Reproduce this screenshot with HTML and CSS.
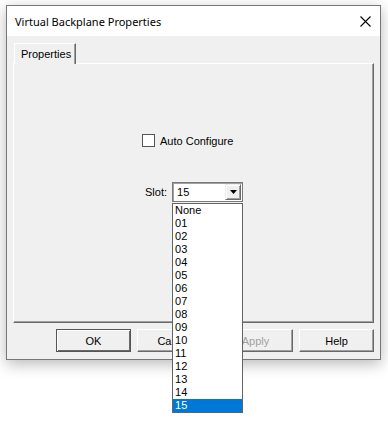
FILE: index.html
```html
<!DOCTYPE html>
<html lang="en">
<head>
  <meta charset="UTF-8">
  <title>Virtual Backplane Properties</title>
  <link rel="stylesheet" href="styles.css">
</head>
<body>
  <!-- Dialog Window -->
  <div class="window">
    <div class="titlebar">
      <span class="title">Virtual Backplane Properties</span>
      <svg class="close" width="11" height="11" viewBox="0 0 11 11">
        <path d="M0.5 0.5 L10.5 10.5 M10.5 0.5 L0.5 10.5" stroke="#000" stroke-width="1.1" fill="none"/>
      </svg>
    </div>

    <div class="client">
      <!-- Tab strip -->
      <div class="tabs">
        <div class="tab">Properties</div>
      </div>

      <!-- Tab page -->
      <div class="panel">
        <label class="check-row">
          <span class="checkbox"></span>
          <span>Auto Configure</span>
        </label>

        <div class="slot-row">
          <span class="slot-label">Slot:</span>
          <div class="combo">
            <span class="combo-value">15</span>
            <span class="combo-btn">
              <svg width="7" height="4" viewBox="0 0 7 4"><path d="M0 0 H7 L3.5 4 Z" fill="#000"/></svg>
            </span>

            <!-- Open drop-down list -->
            <ul class="droplist">
              <li>None</li>
              <li>01</li>
              <li>02</li>
              <li>03</li>
              <li>04</li>
              <li>05</li>
              <li>06</li>
              <li>07</li>
              <li>08</li>
              <li>09</li>
              <li>10</li>
              <li>11</li>
              <li>12</li>
              <li>13</li>
              <li>14</li>
              <li class="selected">15</li>
            </ul>
          </div>
        </div>
      </div>

      <!-- Dialog buttons -->
      <div class="buttons">
        <button class="btn default">OK</button>
        <button class="btn">Cancel</button>
        <button class="btn" disabled>Apply</button>
        <button class="btn">Help</button>
      </div>
    </div>
  </div>
</body>
</html>
```

FILE: styles.css
```css
/* Base */
* { box-sizing: border-box; margin: 0; padding: 0; }
html, body {
  height: 100%;
  background: #fff;
  font-family: "Liberation Sans", Arial, sans-serif;
  font-size: 11px;
  color: #000;
}
body { padding-top: 5px; }

/* Window frame */
.window {
  margin-left: 6px;
  width: 375px;
  height: 355px;
  border: 1px solid #777;
  background: #f0f0f0;
  box-shadow: 0 4px 14px rgba(0, 0, 0, 0.28);
  display: flex;
  flex-direction: column;
}

/* Title bar */
.titlebar {
  height: 30px;
  background: #fff;
  display: flex;
  align-items: center;
  justify-content: space-between;
  padding: 0 9px 0 8px;
}
.title {
  font-family: "Noto Sans", "Liberation Sans", sans-serif;
  font-size: 11px;
  padding-top: 1px;
}

/* Client area */
.client {
  flex: 1;
  padding: 7px 6px 0 6px;
  display: flex;
  flex-direction: column;
}

/* Tabs */
.tabs {
  display: flex;
  padding-left: 1px;
  height: 20px;
}
.tab {
  width: 62px;
  height: 21px;
  padding: 4px 0 0 6px;
  background: #f0f0f0;
  border-top: 1px solid #fff;
  border-left: 1px solid #fff;
  border-right: 1px solid #696969;
  box-shadow: inset -1px 0 0 #a0a0a0;
  position: relative;
  z-index: 1;
}

.panel {
  width: 361px;
  height: 260px;
  border-top: 1px solid #fff;
  border-left: 1px solid #fff;
  border-right: 1px solid #696969;
  border-bottom: 1px solid #696969;
  box-shadow: inset -1px -1px 0 #a0a0a0;
  display: flex;
  flex-direction: column;
  padding: 70px 0 0 128px;
}

/* Checkbox row */
.check-row {
  display: flex;
  align-items: center;
  gap: 5px;
  height: 13px;
}
.checkbox {
  width: 13px;
  height: 13px;
  border: 1px solid #555;
  background: #fff;
}

/* Slot row */
.slot-row {
  display: flex;
  align-items: center;
  margin-top: 35px;
  margin-left: 3px;
  gap: 5px;
}
.combo {
  position: relative;
  width: 71px;
  height: 20px;
  background: #fff;
  border: 1px solid #7a7a7a;
  box-shadow: inset 1px 1px 0 #a0a0a0;
  display: flex;
  align-items: center;
  justify-content: space-between;
  padding: 0 1px 0 4px;
}
.combo-btn {
  width: 16px;
  height: 16px;
  background: #f0f0f0;
  border-top: 1px solid #f0f0f0;
  border-left: 1px solid #f0f0f0;
  border-right: 1px solid #696969;
  border-bottom: 1px solid #696969;
  box-shadow: inset 1px 1px 0 #fff, inset -1px -1px 0 #a0a0a0;
  display: flex;
  align-items: center;
  justify-content: center;
}

/* Drop-down list (popup) */
.droplist {
  position: absolute;
  top: 20px;
  left: -1px;
  width: 71px;
  list-style: none;
  background: #fff;
  border: 1px solid #646464;
  z-index: 5;
}
.droplist li {
  height: 13px;
  line-height: 13px;
  padding-left: 2px;
}
.droplist li.selected {
  background: #0078d7;
  color: #fff;
}

/* Buttons */
.buttons {
  display: flex;
  justify-content: flex-end;
  gap: 6px;
  margin-top: 6px;
}
.btn {
  width: 75px;
  height: 23px;
  font-family: "Liberation Sans", Arial, sans-serif;
  font-size: 11px;
  background: #f0f0f0;
  color: #000;
  border-top: 1px solid #fff;
  border-left: 1px solid #fff;
  border-right: 1px solid #696969;
  border-bottom: 1px solid #696969;
  box-shadow: inset -1px -1px 0 #a0a0a0;
}
.btn.default {
  border: 1px solid #555;
  box-shadow: inset 1px 1px 0 #fff, inset -1px -1px 0 #696969;
}
.btn:disabled {
  color: #a0a0a0;
}
```
